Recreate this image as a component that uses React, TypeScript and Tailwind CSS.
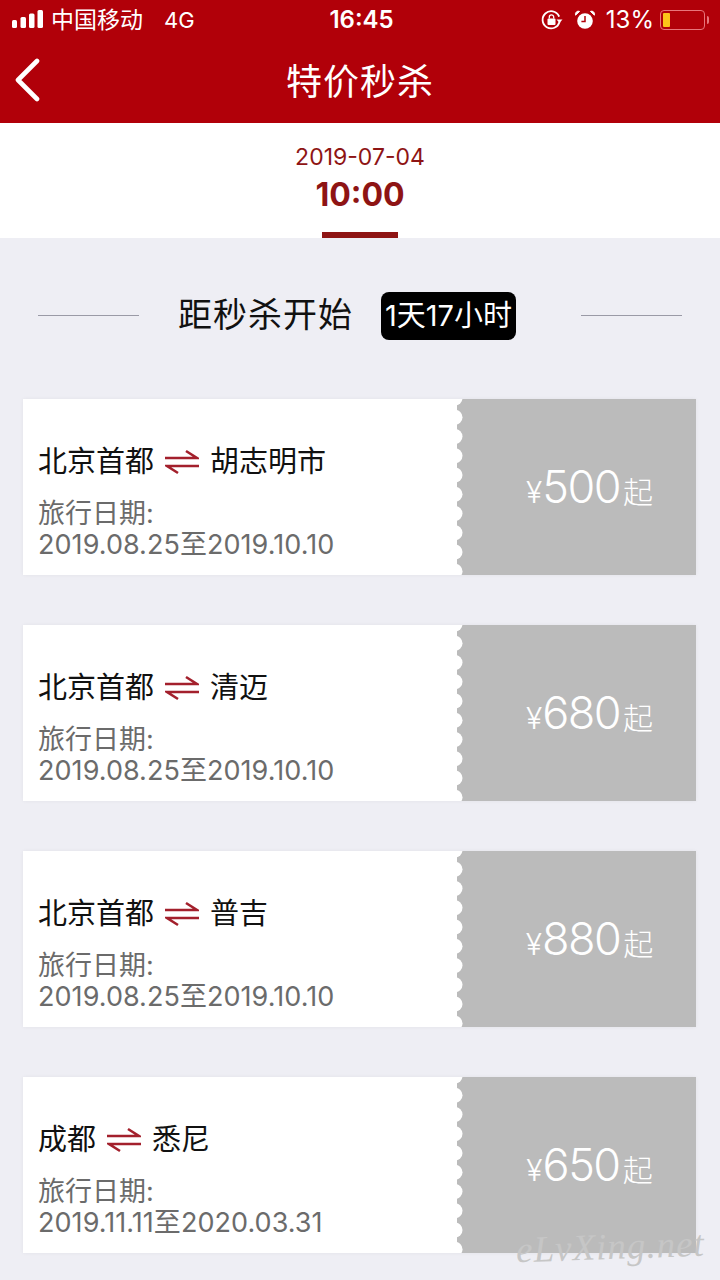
const FONT = "font-['Inter','Noto_Sans_CJK_SC',sans-serif]";

type Deal = { from: string; to: string; dates: string; price: string };

const DEALS: Deal[] = [
  { from: "北京首都", to: "胡志明市", dates: "2019.08.25至2019.10.10", price: "500" },
  { from: "北京首都", to: "清迈", dates: "2019.08.25至2019.10.10", price: "680" },
  { from: "北京首都", to: "普吉", dates: "2019.08.25至2019.10.10", price: "880" },
  { from: "成都", to: "悉尼", dates: "2019.11.11至2020.03.31", price: "650" },
];

function SignalBars() {
  return (
    <svg width="32" height="20" viewBox="0 0 32 20" fill="#fff">
      <rect x="0" y="10" width="5" height="8" rx="1.5" />
      <rect x="8.5" y="7" width="5.5" height="11" rx="1.5" />
      <rect x="17" y="3.5" width="5.5" height="14.5" rx="1.5" />
      <rect x="25.5" y="0" width="5.5" height="18" rx="1.5" />
    </svg>
  );
}

function RotationLock() {
  return (
    <svg width="24" height="24" viewBox="0 0 24 24" fill="none">
      <path d="M19.5 14a8.6 8.6 0 1 1-.6-6" stroke="#fff" strokeWidth="1.8" strokeLinecap="round" />
      <path d="M16.5 11.5h6l-3 3.6z" fill="#fff" />
      <rect x="7.5" y="10.5" width="8" height="6.5" rx="1" fill="#fff" />
      <path d="M9.3 10.5V9a2.2 2.2 0 0 1 4.4 0v1.5" stroke="#fff" strokeWidth="1.3" />
    </svg>
  );
}

function AlarmClock() {
  return (
    <svg width="22" height="22" viewBox="0 0 22 22" fill="none">
      <circle cx="11" cy="12" r="7.8" fill="#fff" />
      <path d="M11 7v5.4H7.4" stroke="#b10009" strokeWidth="1.5" />
      <path d="M1.6 6.2 5.6 2.4A3 3 0 0 0 1.6 6.2zM20.4 6.2 16.4 2.4A3 3 0 0 1 20.4 6.2z" fill="#fff" stroke="#fff" />
    </svg>
  );
}

function Battery() {
  return (
    <div className="flex items-center">
      <div className="flex h-[20px] w-[45px] items-center rounded-[4px] border border-[#e8757b] p-[2px]">
        <div className="h-full w-[7px] rounded-[1px] bg-[#fcc419]" />
      </div>
      <div className="ml-[2px] h-[8px] w-[2px] rounded-r-sm bg-[#e8757b]" />
    </div>
  );
}

function BackArrow() {
  return (
    <svg width="30" height="44" viewBox="0 0 30 44" fill="none" stroke="#fff" strokeWidth="4.6" strokeLinecap="round" strokeLinejoin="round">
      <path d="M25 3 6 22l19 19" />
    </svg>
  );
}

function SwapArrows() {
  return (
    <svg width="34" height="26" viewBox="0 0 34 26" fill="none" stroke="#a3202c" strokeWidth="2.6">
      <path d="M0 9h32L21 2" />
      <path d="M34 17H2l11 7" />
    </svg>
  );
}

// white bumps along the left edge of the grey price panel
function Scallops() {
  return (
    <svg className="absolute left-0 top-0" width="8" height="176" viewBox="0 0 8 176" fill="#fff">
      {[0, 1, 2, 3, 4, 5, 6, 7, 8, 9].map((i) => (
        <circle key={i} cx="-2" cy={i * 19.25 - 1} r="7.5" />
      ))}
    </svg>
  );
}

function DealCard({ deal }: { deal: Deal }) {
  return (
    <div className="flex h-[176px] bg-white shadow-[0_0_4px_rgba(0,0,0,0.05)]">
      <div className="flex w-[434px] flex-col pl-[15px] pt-[45px]">
        <div className="flex h-[36px] items-center text-[29px] leading-[36px] text-[#111]">
          <span>{deal.from}</span>
          <span className="mx-[11px] flex">
            <SwapArrows />
          </span>
          <span>{deal.to}</span>
        </div>
        <div className="mt-[18px] text-[27px] leading-[32px] text-[#6b6b6b]">旅行日期:</div>
        <div className="text-[27px] leading-[30px] tracking-[0.05px] text-[#6b6b6b]">{deal.dates}</div>
      </div>
      <div className="relative flex flex-1 items-center justify-center bg-[#bbbbbb] pb-[2px] pl-[26px] text-white">
        <Scallops />
        <span className="flex items-baseline font-light">
          <span className="text-[30px] leading-none">¥</span>
          <span className="text-[45px] leading-none tracking-[-1.5px]">{deal.price}</span>
          <span className="ml-[3px] text-[30px] leading-none">起</span>
        </span>
      </div>
    </div>
  );
}

export default function App() {
  return (
    <div className={`relative h-[1280px] w-[720px] overflow-hidden bg-[#eeeef4] ${FONT}`}>
      <header className="h-[123px] bg-[#b10009] text-white">
        <div className="flex h-[40px] items-center justify-between pl-[12px] pr-[11px]">
          <div className="flex w-[260px] items-center text-[23px]">
            <SignalBars />
            <span className="ml-[7px]">中国移动</span>
            <span className="ml-[21px] text-[22px]">4G</span>
          </div>
          <div className="pl-[2px] text-[24px] font-semibold">16:45</div>
          <div className="flex w-[260px] items-center justify-end">
            <RotationLock />
            <span className="ml-[10px] flex">
              <AlarmClock />
            </span>
            <span className="ml-[10px] mr-[6px] text-[24px]">13%</span>
            <Battery />
          </div>
        </div>
        <div className="relative flex h-[83px] items-center justify-center">
          <span className="absolute left-[12px] top-[18px] flex">
            <BackArrow />
          </span>
          <h1 className="text-[36px] font-normal tracking-[1px]">特价秒杀</h1>
        </div>
      </header>

      <section className="flex h-[115px] flex-col items-center bg-white text-[#8e1414]">
        <div className="mt-[20px] text-[23px] leading-[28px]">2019-07-04</div>
        <div className="mt-[2px] text-[32px] font-bold leading-[44px]">10:00</div>
        <div className="mt-auto h-[6px] w-[76px] bg-[#8e1414]" />
      </section>

      <section className="flex h-[161px] items-start px-[38px] pt-[54px]">
        <div className="mt-[23px] h-[1px] w-[101px] bg-[#9a9aa6]" />
        <div className="ml-[39px] text-[34px] leading-[46px] tracking-[1px] text-[#111]">距秒杀开始</div>
        <div className="ml-[28px] flex h-[48px] w-[135px] items-center justify-center rounded-[8px] bg-black text-[29px] text-white">
          1天17小时
        </div>
        <div className="ml-auto mt-[23px] h-[1px] w-[101px] bg-[#9a9aa6]" />
      </section>

      <main className="flex flex-col gap-[50px] pl-[23px] pr-[24px]">
        {DEALS.map((d) => (
          <DealCard key={d.from + d.to} deal={d} />
        ))}
      </main>

      <div className="absolute left-[516px] top-[1228px] -rotate-2 font-['Liberation_Serif',serif] text-[37px] italic leading-none tracking-[1px] text-[#c6c6c6]">
        eLvXing.net
      </div>
    </div>
  );
}
